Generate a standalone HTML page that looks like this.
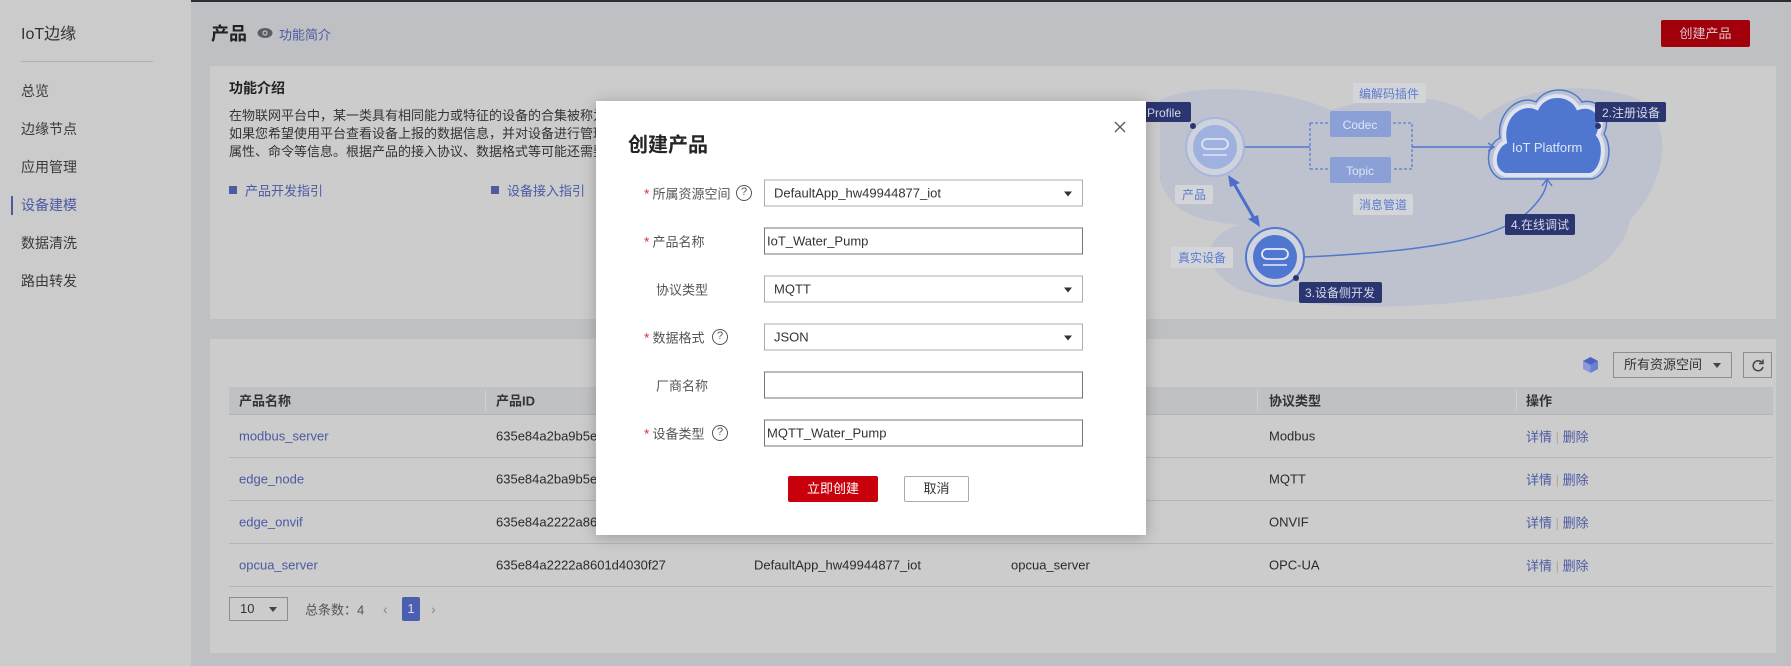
<!DOCTYPE html>
<html><head><meta charset="utf-8"><style>
*{box-sizing:border-box;margin:0;padding:0}
body{width:1791px;height:666px;overflow:hidden;position:relative;background:#bfc0c3;font-family:"Liberation Sans","Noto Sans CJK SC",sans-serif;color:#2b2b2b;font-size:13px}
.a{position:absolute;white-space:nowrap}
.side{position:absolute;left:0;top:0;width:191px;height:666px;background:#cbcbcb}
.mi{position:absolute;left:21px;font-size:14px;color:#3a3a3a;transform:translateY(-50%)}
.card{position:absolute;left:210px;width:1566px;background:#cccccc}
.v{transform:translateY(-50%)}
.lk{color:#4b5aa3}
.hl{position:absolute;left:229px;width:1544px;height:1px;background:#b4b5b7}
.modal{position:absolute;left:596px;top:101px;width:550px;height:434px;background:#fff;box-shadow:0 2px 14px rgba(0,0,0,.25)}
.lab{position:absolute;left:48px;font-size:13px;color:#555;transform:translateY(-50%)}
.lab b{color:#e0393e;font-weight:normal;margin-right:3px;font-size:14px}
.q{position:absolute;width:16px;height:16px;border:1.3px solid #555;border-radius:50%;font-size:11px;line-height:13px;text-align:center;color:#555;transform:translateY(-50%)}
.in{position:absolute;left:168px;width:319px;height:27px;border:1px solid #adadad;transform:translateY(-50%);font-size:13px;line-height:25px;padding-left:9px;color:#333}
.in.t{border-color:#777;padding-left:2px}
.in .c{position:absolute;right:10px;top:11px;border-left:4.5px solid transparent;border-right:4.5px solid transparent;border-top:5px solid #333}
</style></head><body>
<div class="a" style="left:0;top:0;width:1791px;height:2px;background:#2a2c33"></div>
<div class="side">
<div class="a" style="left:21px;top:32px;font-size:16px;color:#333;transform:translateY(-50%)">IoT边缘</div>
<div class="a" style="left:21px;top:61px;width:132px;height:1px;background:#b0b0b0"></div>
<div class="mi" style="top:91px">总览</div>
<div class="mi" style="top:129px">边缘节点</div>
<div class="mi" style="top:167px">应用管理</div>
<div class="mi" style="top:205px;color:#4b5aa3">设备建模</div>
<div class="a" style="left:11px;top:196px;width:2px;height:19px;background:#4b5aa3"></div>
<div class="mi" style="top:243px">数据清洗</div>
<div class="mi" style="top:281px">路由转发</div>
</div>
<div class="a v" style="left:211px;top:33px;font-size:18px;font-weight:bold;color:#222">产品</div>
<svg class="a" style="left:257px;top:27px" width="16" height="12" viewBox="0 0 16 12"><ellipse cx="8" cy="6" rx="7.5" ry="5" fill="#5c5d62"/><circle cx="8" cy="6" r="2.6" fill="#bfc0c3"/><circle cx="8" cy="6" r="1.4" fill="#5c5d62"/></svg>
<div class="a v lk" style="left:279px;top:34px;font-size:13px">功能简介</div>
<div class="a" style="left:1661px;top:20px;width:89px;height:27px;background:#a1000b;color:#d8c8cc;font-size:13px;line-height:27px;text-align:center;border-radius:2px">创建产品</div>

<div class="card" style="top:66px;height:253px"></div>
<div class="a v" style="left:229px;top:88px;font-size:14px;font-weight:bold;color:#222">功能介绍</div>
<div class="a" style="left:229px;top:107px;font-size:13px;line-height:18px;color:#333">在物联网平台中，某一类具有相同能力或特征的设备的合集被称为一款产品。<br>如果您希望使用平台查看设备上报的数据信息，并对设备进行管理控制<br>属性、命令等信息。根据产品的接入协议、数据格式等可能还需要您定</div>
<div class="a" style="left:229px;top:186px;width:8px;height:8px;background:#4b5aa3"></div>
<div class="a v lk" style="left:245px;top:190px">产品开发指引</div>
<div class="a" style="left:491px;top:186px;width:8px;height:8px;background:#4b5aa3"></div>
<div class="a v lk" style="left:507px;top:190px">设备接入指引</div>

<svg class="a" style="left:0;top:0" width="1791" height="330">
<path d="M1160 100 C1200 80 1290 90 1330 110 C1400 90 1450 95 1480 120 C1520 85 1590 80 1640 100 C1680 130 1660 190 1630 220 C1620 270 1560 295 1480 300 C1400 310 1300 310 1240 290 C1200 270 1200 235 1240 225 C1190 220 1170 210 1160 180 Z" fill="#bec2cf"/>
<path d="M1310 147 L1244 147" stroke="#5478cd" stroke-width="1.5"/>
<path d="M1310 123 V169 M1310 123 H1328 M1310 169 H1328 M1393 123 H1412 V169 H1393 M1412 147 H1493" stroke="#5a7fd3" stroke-width="1.3" stroke-dasharray="3,2" fill="none"/>
<path d="M1412 147 H1493 M1488 143 L1494 147 L1488 151" stroke="#5478cd" stroke-width="1.5" fill="none"/>
<rect x="1330" y="111" width="61" height="26" rx="2" fill="#8aa0d6"/><text x="1360" y="129" font-size="12" fill="#dfe5f5" text-anchor="middle" font-family="Liberation Sans">Codec</text>
<rect x="1330" y="157" width="61" height="26" rx="2" fill="#8aa0d6"/><text x="1360" y="175" font-size="12" fill="#dfe5f5" text-anchor="middle" font-family="Liberation Sans">Topic</text>
<rect x="1353" y="83" width="73" height="20" rx="2" fill="#d4d5d9"/><text x="1389" y="98" font-size="12" fill="#5a7ccf" text-anchor="middle">编解码插件</text>
<rect x="1353" y="194" width="60" height="21" rx="2" fill="#d4d5d9"/><text x="1383" y="209" font-size="12" fill="#5a7ccf" text-anchor="middle">消息管道</text>
<circle cx="1215" cy="147" r="29" fill="#cfd3de" stroke="#a9b6dc" stroke-width="2"/><circle cx="1215" cy="147" r="22" fill="#9fb1de"/>
<rect x="1202" y="139" width="26" height="10" rx="5" fill="none" stroke="#dfe5f5" stroke-width="1.8"/><path d="M1203 155 H1227" stroke="#dfe5f5" stroke-width="1.5"/>
<rect x="1140" y="102" width="51" height="20" rx="2" fill="#2b356f"/><text x="1147" y="117" font-size="12" fill="#d6dbea" font-family="Liberation Sans">Profile</text>
<circle cx="1193" cy="126" r="3" fill="#2b356f"/>
<rect x="1175" y="185" width="38" height="19" rx="2" fill="#d4d5d9"/><text x="1194" y="199" font-size="12" fill="#5a7ccf" text-anchor="middle">产品</text>
<path d="M1233 182 L1255 220" stroke="#4a6fcb" stroke-width="3"/><path d="M1228 175 L1240 183 L1230 187 Z M1260 227 L1248 219 L1258 215 Z" fill="#4a6fcb"/>
<path d="M1304 257 C1420 252 1500 240 1530 210 C1545 195 1547 185 1547 180 M1542 186 L1547 179 L1552 186" stroke="#5478cd" stroke-width="1.5" fill="none"/>
<circle cx="1275" cy="257" r="29" fill="#d0d4df" stroke="#5478cd" stroke-width="2"/><circle cx="1275" cy="257" r="22" fill="#5077cf"/>
<rect x="1262" y="249" width="26" height="10" rx="5" fill="none" stroke="#e5eaf7" stroke-width="1.8"/><path d="M1263 265 H1287" stroke="#e5eaf7" stroke-width="1.5"/>
<rect x="1171" y="247" width="62" height="21" rx="2" fill="#d4d5d9"/><text x="1202" y="262" font-size="12" fill="#5a7ccf" text-anchor="middle">真实设备</text>
<circle cx="1296" cy="278" r="3" fill="#2b356f"/>
<rect x="1299" y="282" width="83" height="21" rx="2" fill="#2b356f"/><text x="1340" y="297" font-size="12" fill="#d6dbea" text-anchor="middle">3.设备侧开发</text>
<rect x="1505" y="214" width="70" height="21" rx="2" fill="#2b356f"/><text x="1540" y="229" font-size="12" fill="#d6dbea" text-anchor="middle">4.在线调试</text>
<path d="M1505 175 C1490 170 1493 148 1505 142 C1500 118 1520 100 1537 108 C1545 92 1570 92 1578 108 C1595 102 1606 118 1598 135 C1607 145 1603 172 1590 175 Z" fill="#4f77cf" stroke="#dde3f3" stroke-width="4"/>
<path d="M1501 179 C1484 172 1485 145 1500 138 C1496 112 1520 94 1536 102 C1546 86 1572 86 1582 102 C1600 98 1612 116 1604 134 C1614 148 1608 176 1592 179 Z" fill="none" stroke="#4f77cf" stroke-width="1.5"/>
<text x="1547" y="152" font-size="13" fill="#dfe5f5" text-anchor="middle" font-family="Liberation Sans">IoT Platform</text>
<circle cx="1598" cy="126" r="3" fill="#2b356f"/>
<rect x="1595" y="102" width="71" height="20" rx="2" fill="#2b356f"/><text x="1631" y="117" font-size="12" fill="#d6dbea" text-anchor="middle">2.注册设备</text>
</svg>

<div class="card" style="top:339px;height:314px"></div>
<svg class="a" style="left:1582px;top:356px" width="17" height="18" viewBox="0 0 17 18"><path d="M8.5 1 L16 5 L8.5 9 L1 5Z" fill="#4a63c4"/><path d="M1 5 V13 L8.5 17 V9Z" fill="#8a9ad8"/><path d="M16 5 V13 L8.5 17 V9Z" fill="#6c80cf"/></svg>
<div class="a" style="left:1613px;top:352px;width:119px;height:26px;border:1px solid #8d8d8d;font-size:13px;line-height:24px;padding-left:10px;color:#333">所有资源空间<span style="position:absolute;right:10px;top:10px;border-left:4px solid transparent;border-right:4px solid transparent;border-top:5px solid #444"></span></div>
<div class="a" style="left:1743px;top:352px;width:29px;height:26px;border:1px solid #8d8d8d"><svg style="position:absolute;left:7px;top:6px" width="14" height="13" viewBox="0 0 14 13"><path d="M11 3.5 A5 5 0 1 0 12 8" fill="none" stroke="#444" stroke-width="1.5"/><path d="M12 0.5 V4.5 H8" fill="none" stroke="#444" stroke-width="1.5"/></svg></div>
<div class="a" style="left:229px;top:387px;width:1544px;height:27px;background:#c0c1c4"></div>
<div class="a" style="left:485px;top:390px;width:1px;height:21px;background:#cfd0d3"></div>
<div class="a" style="left:1257px;top:390px;width:1px;height:21px;background:#cfd0d3"></div>
<div class="a" style="left:1516px;top:390px;width:1px;height:21px;background:#cfd0d3"></div>
<div class="a v" style="left:239px;top:400px;font-weight:bold;color:#333">产品名称</div>
<div class="a v" style="left:496px;top:400px;font-weight:bold;color:#333">产品ID</div>
<div class="a v" style="left:1269px;top:400px;font-weight:bold;color:#333">协议类型</div>
<div class="a v" style="left:1526px;top:400px;font-weight:bold;color:#333">操作</div>
<div class="hl" style="top:414px"></div><div class="hl" style="top:457px"></div><div class="hl" style="top:500px"></div><div class="hl" style="top:543px"></div><div class="hl" style="top:586px"></div>
<div class="a v lk" style="left:239px;top:436px">modbus_server</div><div class="a v" style="left:496px;top:436px">635e84a2ba9b5e2</div><div class="a v" style="left:1269px;top:436px">Modbus</div>
<div class="a v lk" style="left:239px;top:479px">edge_node</div><div class="a v" style="left:496px;top:479px">635e84a2ba9b5e2</div><div class="a v" style="left:1269px;top:479px">MQTT</div>
<div class="a v lk" style="left:239px;top:522px">edge_onvif</div><div class="a v" style="left:496px;top:522px">635e84a2222a860</div><div class="a v" style="left:1269px;top:522px">ONVIF</div>
<div class="a v lk" style="left:239px;top:565px">opcua_server</div><div class="a v" style="left:496px;top:565px">635e84a2222a8601d4030f27</div><div class="a v" style="left:754px;top:565px">DefaultApp_hw49944877_iot</div><div class="a v" style="left:1011px;top:565px">opcua_server</div><div class="a v" style="left:1269px;top:565px">OPC-UA</div>
<div class="a v lk" style="left:1526px;top:436px">详情 <span style="color:#aaa">|</span> 删除</div>
<div class="a v lk" style="left:1526px;top:479px">详情 <span style="color:#aaa">|</span> 删除</div>
<div class="a v lk" style="left:1526px;top:522px">详情 <span style="color:#aaa">|</span> 删除</div>
<div class="a v lk" style="left:1526px;top:565px">详情 <span style="color:#aaa">|</span> 删除</div>
<div class="a" style="left:229px;top:597px;width:59px;height:24px;border:1px solid #8d8d8d;padding-left:10px;line-height:22px;color:#333">10<span style="position:absolute;right:10px;top:9px;border-left:4px solid transparent;border-right:4px solid transparent;border-top:5px solid #444"></span></div>
<div class="a v" style="left:305px;top:609px;color:#555">总条数：4</div>
<div class="a v" style="left:383px;top:609px;color:#888;font-size:14px">‹</div>
<div class="a" style="left:402px;top:597px;width:18px;height:24px;background:#4b5fb0;color:#d8dcee;text-align:center;line-height:24px;border-radius:2px">1</div>
<div class="a v" style="left:431px;top:609px;color:#888;font-size:14px">›</div>

<div class="modal">
<div class="a v" style="left:32px;top:42px;font-size:20px;font-weight:bold;color:#252525">创建产品</div>
<svg class="a" style="left:518px;top:20px" width="12" height="12" viewBox="0 0 12 12"><path d="M1 1 L11 11 M11 1 L1 11" stroke="#555" stroke-width="1.3"/></svg>
<div class="lab" style="top:92px"><b>*</b>所属资源空间</div><div class="q" style="left:140px;top:92px">?</div>
<div class="in" style="top:92px">DefaultApp_hw49944877_iot<span class="c"></span></div>
<div class="lab" style="top:140px"><b>*</b>产品名称</div>
<div class="in t" style="top:140px">IoT_Water_Pump</div>
<div class="lab" style="top:188px;left:60px">协议类型</div>
<div class="in" style="top:188px">MQTT<span class="c"></span></div>
<div class="lab" style="top:236px"><b>*</b>数据格式</div><div class="q" style="left:116px;top:236px">?</div>
<div class="in" style="top:236px">JSON<span class="c"></span></div>
<div class="lab" style="top:284px;left:60px">厂商名称</div>
<div class="in t" style="top:284px"></div>
<div class="lab" style="top:332px"><b>*</b>设备类型</div><div class="q" style="left:116px;top:332px">?</div>
<div class="in t" style="top:332px">MQTT_Water_Pump</div>
<div class="a" style="left:192px;top:375px;width:90px;height:26px;background:#c7000b;color:#fff;text-align:center;line-height:26px;border-radius:2px">立即创建</div>
<div class="a" style="left:308px;top:375px;width:65px;height:26px;border:1px solid #aaa;color:#333;text-align:center;line-height:24px;border-radius:2px">取消</div>
</div>
</body></html>
